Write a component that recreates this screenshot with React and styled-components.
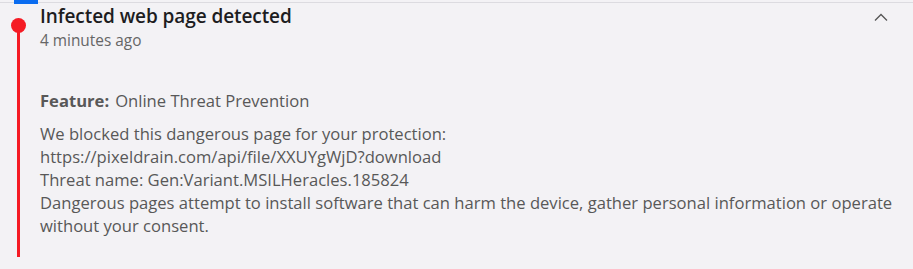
import React from 'react';
import styled, { createGlobalStyle } from 'styled-components';

const GlobalStyle = createGlobalStyle`
	html, body {
		margin: 0;
		padding: 0;
		background: #f3f2f5;
	}
	body {
		font-family: "Open Sans", "Noto Sans", sans-serif;
	}
`

const Entry = styled.div`
	width: 913px;
	height: 269px;
	box-sizing: border-box;
	border-top: 1px solid #dcdbe0;
	margin-top: 2px;
	display: flex;
	position: relative;
`

const Marker = styled.div`
	position: absolute;
	top: -3px;
	left: 14px;
	width: 24px;
	height: 4px;
	background: #0a6cf0;
`

const Timeline = styled.div`
	width: 40px;
	flex-shrink: 0;
	display: flex;
	flex-direction: column;
	align-items: center;
	padding-top: 15px;
	padding-right: 3px;
	box-sizing: border-box;
`

const Dot = styled.div`
	width: 15px;
	height: 15px;
	border-radius: 50%;
	background: #f51b24;
`

const Line = styled.div`
	width: 3px;
	height: 225px;
	margin-top: -1px;
	background: #f51b24;
`

const Content = styled.div`
	flex: 1;
`

const Header = styled.div`
	display: flex;
	justify-content: space-between;
	align-items: flex-start;
`

const Title = styled.div`
	font-size: 19px;
	font-weight: 600;
	color: #1d1d1f;
	line-height: 26px;
	letter-spacing: -0.08px;
`

const Time = styled.div`
	font-size: 15.4px;
	color: #666;
	line-height: 22px;
	margin-top: 1px;
`

const Toggle = styled.button`
	border: none;
	background: none;
	padding: 0;
	margin: 9px 24px 0 0;
	width: 16px;
	height: 12px;
	display: flex;
	cursor: pointer;
`

const Details = styled.div`
	margin-top: 37px;
	font-size: 16.6px;
	color: #585858;
	line-height: 23px;
	padding-right: 18px;
`

const Feature = styled.div`
	margin-bottom: 10px;
	b {
		font-weight: 700;
		margin-right: 6px;
	}
`

function App() {
	return (
		<>
			<GlobalStyle />
			<Entry>
				<Marker />
				<Timeline>
					<Dot />
					<Line />
				</Timeline>
				<Content>
					<Header>
						<div>
							<Title>Infected web page detected</Title>
							<Time>4 minutes ago</Time>
						</div>
						<Toggle aria-label="collapse">
							<svg width="16" height="10" viewBox="0 0 16 10">
								<path d="M2 8.5 L8 2.5 L14 8.5" fill="none" stroke="#555" strokeWidth="1.3" />
							</svg>
						</Toggle>
					</Header>
					<Details>
						<Feature><b>Feature:</b>Online Threat Prevention</Feature>
						<div>We blocked this dangerous page for your protection:</div>
						<div>https://pixeldrain.com/api/file/XXUYgWjD?download</div>
						<div>Threat name: Gen:Variant.MSILHeracles.185824</div>
						<div>Dangerous pages attempt to install software that can harm the device, gather personal information or operate without your consent.</div>
					</Details>
				</Content>
			</Entry>
		</>
	)
}

export default App
